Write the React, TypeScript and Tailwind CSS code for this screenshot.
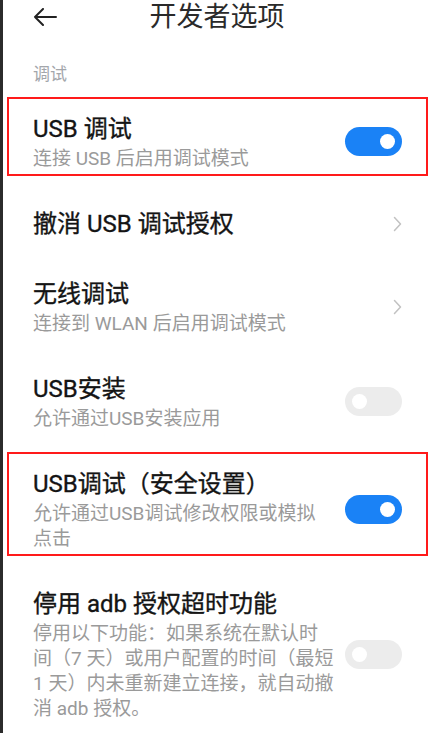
type Row = {
  title: string
  desc?: string
  kind: 'on' | 'off' | 'link'
  marked?: boolean
}

const rows: Row[] = [
  { title: 'USB 调试', desc: '连接 USB 后启用调试模式', kind: 'on', marked: true },
  { title: '撤消 USB 调试授权', kind: 'link' },
  { title: '无线调试', desc: '连接到 WLAN 后启用调试模式', kind: 'link' },
  { title: 'USB安装', desc: '允许通过USB安装应用', kind: 'off' },
  {
    title: 'USB调试（安全设置）',
    desc: '允许通过USB调试修改权限或模拟点击',
    kind: 'on',
    marked: true,
  },
  {
    title: '停用 adb 授权超时功能',
    desc: '停用以下功能：如果系统在默认时间（7 天）或用户配置的时间（最短 1 天）内未重新建立连接，就自动撤消 adb 授权。',
    kind: 'off',
  },
]

const Switch = ({ on }: { on: boolean }) => (
  <div
    className={`flex h-[29px] w-[57px] items-center rounded-full px-[7px] ${
      on ? 'justify-end bg-[#1a82f6]' : 'justify-start bg-[#ececec]'
    }`}
  >
    <div className="h-[15px] w-[15px] rounded-full bg-white" />
  </div>
)

const BackArrow = () => (
  <svg width="24" height="18" viewBox="0 0 24 18" fill="none" stroke="#222" strokeWidth="2" strokeLinecap="round" strokeLinejoin="round">
    <path d="M23 9H2M10 1L2 9l8 8" />
  </svg>
)

const Chevron = () => (
  <svg width="9" height="16" viewBox="0 0 9 16" fill="none" stroke="#c2c2c2" strokeWidth="1.5" strokeLinecap="round" strokeLinejoin="round">
    <path d="M1.5 1.5L7.5 8l-6 6.5" />
  </svg>
)

const SettingRow = ({ row }: { row: Row }) => (
  <div className="relative flex items-center py-[18px] pl-[30px] pr-[29px]">
    <div className="mr-[11px] flex-1">
      <div className="text-[24px] leading-[34px] text-[#141414] [-webkit-text-stroke:0.35px_#141414]">{row.title}</div>
      {row.desc && <div className="text-[19px] leading-[25px] text-[#9a9a9a]">{row.desc}</div>}
    </div>
    <div className="flex w-[57px] shrink-0 justify-end">
      {row.kind === 'link' ? <Chevron /> : <Switch on={row.kind === 'on'} />}
    </div>
    {row.marked && (
      <span className="pointer-events-none absolute top-[3px] right-[3px] bottom-[13px] left-[4px] border-2 border-[#ff1a1a]" />
    )}
  </div>
)

export default function App() {
  return (
    <div className="flex h-[733px] w-[431px] overflow-hidden bg-white font-['Roboto','Noto_Sans_CJK_SC',sans-serif]">
      <div className="w-[3px] shrink-0 bg-[#2b2b2b]" />
      <div className="flex-1">
        <div className="flex h-[34px] items-center px-[30px]">
          <BackArrow />
          <div className="flex-1 text-center text-[27px] leading-[34px] text-[#2a2a2a]">开发者选项</div>
          <div className="w-[24px]" />
        </div>
        <div className="mt-[28px] mb-[8px] pl-[30px] text-[17px] leading-[24px] text-[#a3a6ab]">调试</div>
        {rows.map((row) => (
          <SettingRow key={row.title} row={row} />
        ))}
      </div>
    </div>
  )
}
